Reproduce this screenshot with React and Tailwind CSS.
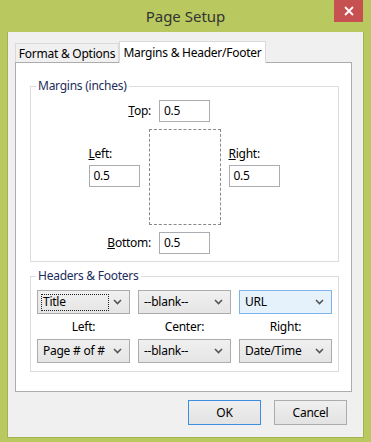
const Field = ({ value }) => {
  return (
    <div className="w-[51px] h-[22px] border border-[#abadb3] bg-white flex items-center pl-[4px] text-[12px] text-black">
      {value}
    </div>
  );
};

const Chevron = () => {
  return (
    <svg width="9" height="6" viewBox="0 0 9 6" className="shrink-0">
      <path d="M1 1 L4.5 4.5 L8 1" fill="none" stroke="#555" strokeWidth="1.6" />
    </svg>
  );
};

const Select = ({ value, active, focus }) => {
  return (
    <div
      className={
        active
          ? "h-[24px] border border-[#7eb4ea] bg-[#e5f1fb] flex items-center justify-between pl-[3px] pr-[7px]"
          : "h-[24px] border border-[#acacac] bg-gradient-to-b from-[#f0f0f0] to-[#e5e5e5] flex items-center justify-between pl-[3px] pr-[7px]"
      }
    >
      <span
        className={
          focus
            ? "w-[68px] h-[17px] border border-dotted border-[#222] flex items-center pl-[1px]"
            : "h-[17px] flex items-center pl-[2px]"
        }
      >
        {value}
      </span>
      <Chevron />
    </div>
  );
};

const Group = ({ title, className, children }) => {
  return (
    <div className={"relative border border-[#dcdcdc] " + className}>
      <span className="absolute left-[5px] -top-[9px] bg-white px-[2px] text-[#1b2d5c] leading-[16px]">
        {title}
      </span>
      {children}
    </div>
  );
};

const App = () => {
  return (
    <div
      className="w-[371px] h-[442px] bg-[#b9c95f] flex flex-col relative text-[12px] tracking-[-0.25px] text-black"
      style={{ fontFamily: '"Noto Sans", "Open Sans", sans-serif' }}
    >
      {/* title bar */}
      <div className="h-[32px] flex items-center justify-center text-[15px] tracking-normal text-[#333]">
        Page Setup
      </div>
      <button className="absolute top-0 right-[8px] w-[29px] h-[22px] bg-[#c75050] flex items-center justify-center">
        <svg width="10" height="10" viewBox="0 0 10 10">
          <path d="M1 1 L9 9 M9 1 L1 9" stroke="white" strokeWidth="1.8" />
        </svg>
      </button>

      {/* client area */}
      <div className="mx-[7px] h-[406px] bg-[#f0f0f0] border-l border-b border-r border-[#a3b350] flex flex-col pl-[7px] pt-[8px]">

        {/* tabs */}
        <div className="flex items-end h-[22px]">
          <div className="h-[19px] w-[104px] border border-b-0 border-[#d9d9d9] bg-[#f0f0f0] flex items-center justify-center pt-[1px]">
            Format &amp; Options
          </div>
          <div className="h-[22px] w-[147px] border border-b-0 border-[#d9d9d9] bg-white flex items-center justify-center -mb-[1px] relative z-10">
            Margins &amp; Header/Footer
          </div>
        </div>

        {/* tab panel */}
        <div className="w-[337px] h-[330px] border border-[#acacac] bg-white pl-[14px] pt-[23px]">

          <Group title="Margins (inches)" className="w-[309px] h-[176px] pt-[13px]">
            <div className="grid grid-cols-[1fr_auto_1fr] items-center">
              <span className="justify-self-end mr-[8px]"><u>T</u>op:</span>
              <Field value="0.5" />
              <span />
            </div>

            <div className="grid grid-cols-[1fr_72px_1fr] mt-[7px]">
              <div className="flex flex-col items-end pr-[10px] pt-[17px]">
                <div className="w-[50px]">
                  <div className="leading-[16px] mb-[3px]"><u>L</u>eft:</div>
                  <Field value="0.5" />
                </div>
              </div>
              <div className="h-[96px] border border-dashed border-[#888]" />
              <div className="flex flex-col pl-[8px] pt-[17px]">
                <div className="leading-[16px] mb-[3px]"><u>R</u>ight:</div>
                <Field value="0.5" />
              </div>
            </div>

            <div className="grid grid-cols-[1fr_auto_1fr] items-center mt-[7px]">
              <span className="justify-self-end mr-[8px]"><u>B</u>ottom:</span>
              <Field value="0.5" />
              <span />
            </div>
          </Group>

          <Group title="Headers &amp; Footers" className="w-[309px] h-[96px] mt-[14px] px-[6px] pt-[13px]">
            <div className="grid grid-cols-3 gap-x-[8px]">
              <Select value="Title" focus />
              <Select value="--blank--" />
              <Select value="URL" active />
            </div>
            <div className="grid grid-cols-3 gap-x-[8px] h-[25px] items-center text-center">
              <span>Left:</span>
              <span>Center:</span>
              <span>Right:</span>
            </div>
            <div className="grid grid-cols-3 gap-x-[8px]">
              <Select value="Page # of #" />
              <Select value="--blank--" />
              <Select value="Date/Time" />
            </div>
          </Group>
        </div>

        {/* buttons */}
        <div className="flex justify-end gap-[13px] pr-[16px] mt-[8px]">
          <button className="w-[73px] h-[25px] border border-[#3c8fe0] bg-gradient-to-b from-[#efefef] to-[#e3e3e3]">
            OK
          </button>
          <button className="w-[73px] h-[25px] border border-[#acacac] bg-gradient-to-b from-[#efefef] to-[#e3e3e3]">
            Cancel
          </button>
        </div>
      </div>
    </div>
  );
};

export default App;
